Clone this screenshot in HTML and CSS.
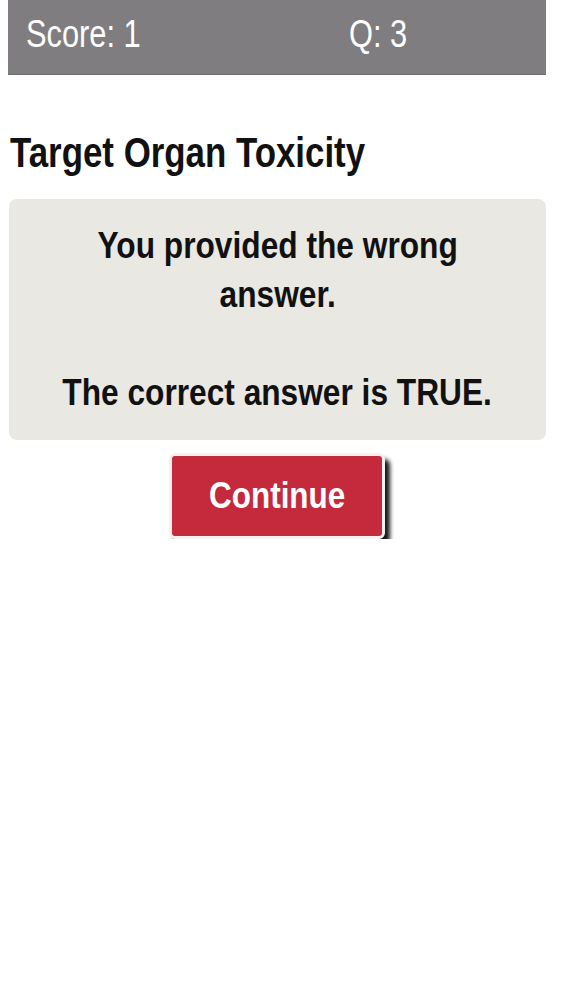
FILE: index.html
```html
<!DOCTYPE html>
<html>
<head>
<meta charset="utf-8">
<link rel="stylesheet" href="styles.css">
</head>
<body>
<div class="page">
  <header class="bar">
    <span class="score"><span class="cond-bar">Score: 1</span></span>
    <span class="q"><span class="cond-bar">Q: 3</span></span>
  </header>
  <h1 class="title"><span class="cond-title">Target Organ Toxicity</span></h1>
  <div class="card">
    <p class="msg"><span class="cond-msg">You provided the wrong<br>answer.</span></p>
    <p class="msg"><span class="cond-msg">The correct answer is TRUE.</span></p>
  </div>
  <div class="actions">
    <button class="btn"><span class="cond-btn">Continue</span></button>
  </div>
</div>
</body>
</html>
```

FILE: styles.css
```css
html, body {
  margin: 0;
  padding: 0;
  background: #ffffff;
}
.page {
  padding: 0 17px 0 8px;
  font-family: "Liberation Sans", Arial, sans-serif;
}
.bar {
  height: 75px;
  background: #7f7d80;
  border-bottom: 1px solid #6e6c6f;
  box-sizing: border-box;
  display: flex;
  align-items: center;
  color: #ffffff;
  font-size: 39px;
  padding-left: 18px;
  padding-bottom: 6px;
}
.score {
  width: 323px;
}
.cond-bar {
  display: inline-block;
  transform: scaleX(0.79);
  transform-origin: left center;
  white-space: nowrap;
}
.title {
  margin: 54px 0 0 2px;
  font-size: 42px;
  line-height: 48px;
  font-weight: bold;
  color: #111;
  white-space: nowrap;
}
.cond-title {
  display: inline-block;
  transform: scaleX(0.83);
  transform-origin: left center;
}
.card {
  margin: 22px 0 0 1px;
  background: #e9e8e3;
  border-radius: 8px;
  height: 241px;
  box-sizing: border-box;
  padding: 22px 10px 0;
  text-align: center;
}
.msg {
  margin: 0 0 49px;
  font-size: 36px;
  line-height: 49px;
  font-weight: bold;
  color: #111;
  white-space: nowrap;
}
.cond-msg {
  display: inline-block;
  transform: scaleX(0.88);
  transform-origin: center center;
}
.actions {
  display: flex;
  justify-content: center;
  padding-top: 13px;
}
.btn {
  width: 216px;
  height: 86px;
  background: #c42a3b;
  color: #ffffff;
  border: 3px solid #f5f1f1;
  border-radius: 6px;
  box-shadow: 5px 6px 4px rgba(0,0,0,0.9);
  font-family: "Liberation Sans", Arial, sans-serif;
  font-size: 37px;
  font-weight: bold;
  padding: 0;
}
.cond-btn {
  display: inline-block;
  transform: scaleX(0.85);
  transform-origin: center center;
}
```
